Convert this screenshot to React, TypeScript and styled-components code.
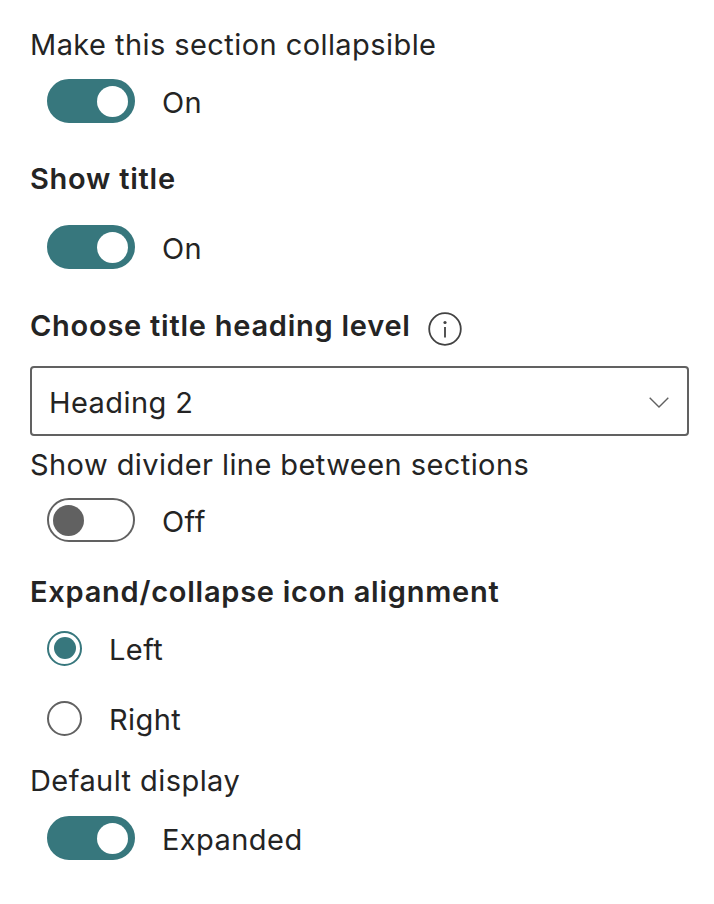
import React from "react";
import styled, { createGlobalStyle } from "styled-components";

const Global = createGlobalStyle`
  html, body { margin: 0; padding: 0; background: #fff; }
  body { font-family: Inter, "Liberation Sans", sans-serif; color: #242424; font-size: 29px; letter-spacing: 0.43px; }
`;

const Panel = styled.div`
  width: 659px;
  padding: 25px 0 0 30px;
  display: flex;
  flex-direction: column;
`;

const Label = styled.div<{ $top?: number; $bold?: boolean }>`
  line-height: 40px;
  height: 40px;
  font-weight: ${(p) => (p.$bold ? 600 : 400)};
  letter-spacing: ${(p) => (p.$bold ? "0.75px" : "0.43px")};
  margin-top: ${(p) => p.$top ?? 0}px;
  white-space: nowrap;
  display: flex;
  align-items: center;
`;

const ToggleRow = styled.div<{ $top: number }>`
  display: flex;
  align-items: center;
  margin: ${(p) => p.$top}px 0 0 17px;
  height: 44px;
  gap: 27px;
`;

const ToggleText = styled.span`
  padding-top: 2px;
`;

const Track = styled.div<{ $on: boolean }>`
  box-sizing: border-box;
  width: 88px;
  height: 44px;
  border-radius: 22px;
  display: flex;
  align-items: center;
  padding: 0 5px 0 4px;
  justify-content: ${(p) => (p.$on ? "flex-end" : "flex-start")};
  background: ${(p) => (p.$on ? "#37777d" : "#fff")};
  border: 2px solid ${(p) => (p.$on ? "#37777d" : "#616161")};
`;

const Thumb = styled.div<{ $on: boolean }>`
  width: 31px;
  height: 31px;
  border-radius: 50%;
  background: ${(p) => (p.$on ? "#fff" : "#616161")};
`;

const InfoIcon = styled.svg`
  width: 34px;
  height: 34px;
  margin-left: 17px;
  margin-top: 5px;
`;

const Select = styled.div`
  box-sizing: border-box;
  margin-top: 20px;
  height: 70px;
  border: 2px solid #616161;
  border-radius: 4px;
  display: flex;
  align-items: center;
  justify-content: space-between;
  padding: 2px 18px 0 17px;
`;

const RadioRow = styled.div<{ $top: number }>`
  display: flex;
  align-items: center;
  height: 36px;
  margin: ${(p) => p.$top}px 0 0 17px;
  gap: 27px;
`;

const Radio = styled.div<{ $on: boolean }>`
  box-sizing: border-box;
  width: 35px;
  height: 35px;
  margin-bottom: 2px;
  border-radius: 50%;
  display: flex;
  align-items: center;
  justify-content: center;
  border: 2px solid ${(p) => (p.$on ? "#37777d" : "#616161")};
`;

const Dot = styled.div`
  width: 22px;
  height: 22px;
  border-radius: 50%;
  background: #37777d;
`;

const Toggle = ({ on, text, top }: { on: boolean; text: string; top: number }) => (
  <ToggleRow $top={top}>
    <Track $on={on}>
      <Thumb $on={on} />
    </Track>
    <ToggleText>{text}</ToggleText>
  </ToggleRow>
);

export default function App() {
  return (
    <>
      <Global />
      <Panel>
        <Label>Make this section collapsible</Label>
        <Toggle on text="On" top={14} />
        <Label $bold $top={36}>Show title</Label>
        <Toggle on text="On" top={26} />
        <Label $bold $top={37}>
          Choose title heading level
          <InfoIcon viewBox="0 0 34 34" fill="none">
            <circle cx="17" cy="17" r="15.8" stroke="#424242" strokeWidth="1.8" />
            <circle cx="17" cy="10.5" r="1.6" fill="#424242" />
            <path d="M17 15v10.5" stroke="#424242" strokeWidth="1.8" />
          </InfoIcon>
        </Label>
        <Select>
          <span>Heading 2</span>
          <svg width="20" height="11" viewBox="0 0 20 11" fill="none">
            <path d="M0.7 0.7L10 10L19.3 0.7" stroke="#616161" strokeWidth="1.4" />
          </svg>
        </Select>
        <Label $top={9}>Show divider line between sections</Label>
        <Toggle on={false} text="Off" top={13} />
        <Label $bold $top={30}>Expand/collapse icon alignment</Label>
        <RadioRow $top={19}>
          <Radio $on><Dot /></Radio>
          <span>Left</span>
        </RadioRow>
        <RadioRow $top={34}>
          <Radio $on={false} />
          <span>Right</span>
        </RadioRow>
        <Label $top={24}>Default display</Label>
        <Toggle on text="Expanded" top={15} />
      </Panel>
    </>
  );
}
